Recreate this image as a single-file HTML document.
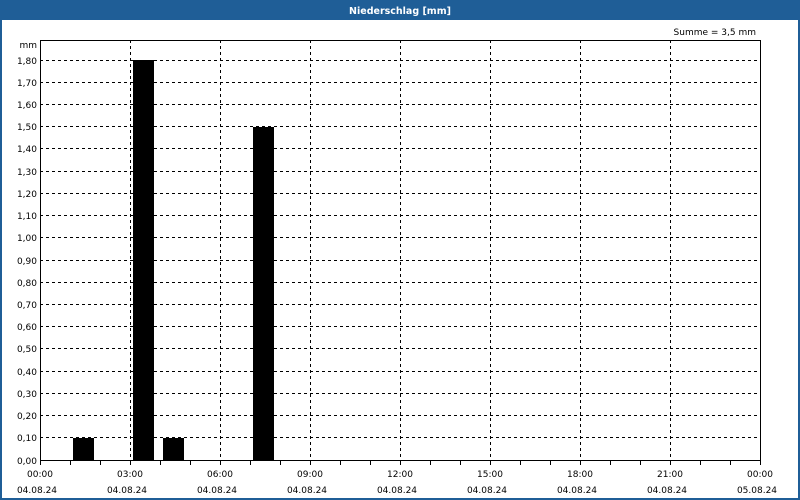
<!DOCTYPE html>
<html><head><meta charset="utf-8"><style>
html,body{margin:0;padding:0;width:800px;height:500px;overflow:hidden;background:#fff}
svg{display:block}
text{font-family:"DejaVu Sans","Liberation Sans",sans-serif;font-size:9px;fill:#000}
</style></head><body>
<svg width="800" height="500" viewBox="0 0 800 500">
<rect x="0" y="0" width="800" height="500" fill="#fff"/>
<rect x="0" y="0" width="800" height="20" fill="#1f5e97"/>
<rect x="0" y="20" width="2" height="480" fill="#1f5e97"/>
<rect x="798" y="20" width="2" height="480" fill="#1f5e97"/>
<rect x="0" y="498" width="800" height="2" fill="#1f5e97"/>
<text x="400" y="14" text-anchor="middle" style="fill:#fff;font-weight:bold;font-size:9.5px">Niederschlag [mm]</text>
<text x="756" y="35" text-anchor="end">Summe = 3,5 mm</text>
<g stroke="#000" stroke-width="1" stroke-dasharray="3,3" fill="none">
<path d="M40 437.5H760M40 415.5H760M40 393.5H760M40 371.5H760M40 348.5H760M40 326.5H760M40 304.5H760M40 282.5H760M40 260.5H760M40 237.5H760M40 215.5H760M40 193.5H760M40 171.5H760M40 148.5H760M40 126.5H760M40 104.5H760M40 82.5H760M40 60.5H760"/>
<path d="M130.5 40V460M220.5 40V460M310.5 40V460M400.5 40V460M490.5 40V460M580.5 40V460M670.5 40V460"/>
</g>
<g fill="#000">
<rect x="73" y="438" width="21" height="22"/>
<rect x="133" y="60" width="21" height="400"/>
<rect x="163" y="438" width="21" height="22"/>
<rect x="253" y="127" width="21" height="333"/>
</g>
<rect x="40.5" y="40.5" width="720" height="420" fill="none" stroke="#000"/>
<g stroke="#000">
<path d="M40.5 460V465M70.5 460V465M100.5 460V465M130.5 460V465M160.5 460V465M190.5 460V465M220.5 460V465M250.5 460V465M280.5 460V465M310.5 460V465M340.5 460V465M370.5 460V465M400.5 460V465M430.5 460V465M460.5 460V465M490.5 460V465M520.5 460V465M550.5 460V465M580.5 460V465M610.5 460V465M640.5 460V465M670.5 460V465M700.5 460V465M730.5 460V465M760.5 460V465"/>
</g>
<g text-anchor="end">
<text x="37" y="48">mm</text>
<text x="37" y="464">0,00</text>
<text x="37" y="441">0,10</text>
<text x="37" y="419">0,20</text>
<text x="37" y="397">0,30</text>
<text x="37" y="375">0,40</text>
<text x="37" y="352">0,50</text>
<text x="37" y="330">0,60</text>
<text x="37" y="308">0,70</text>
<text x="37" y="286">0,80</text>
<text x="37" y="264">0,90</text>
<text x="37" y="241">1,00</text>
<text x="37" y="219">1,10</text>
<text x="37" y="197">1,20</text>
<text x="37" y="175">1,30</text>
<text x="37" y="152">1,40</text>
<text x="37" y="130">1,50</text>
<text x="37" y="108">1,60</text>
<text x="37" y="86">1,70</text>
<text x="37" y="64">1,80</text>
</g>
<g text-anchor="middle">
<text x="40" y="477">00:00</text><text x="37" y="493">04.08.24</text>
<text x="130" y="477">03:00</text><text x="127" y="493">04.08.24</text>
<text x="220" y="477">06:00</text><text x="217" y="493">04.08.24</text>
<text x="310" y="477">09:00</text><text x="307" y="493">04.08.24</text>
<text x="400" y="477">12:00</text><text x="397" y="493">04.08.24</text>
<text x="490" y="477">15:00</text><text x="487" y="493">04.08.24</text>
<text x="580" y="477">18:00</text><text x="577" y="493">04.08.24</text>
<text x="670" y="477">21:00</text><text x="667" y="493">04.08.24</text>
<text x="760" y="477">00:00</text><text x="757" y="493">05.08.24</text>
</g>
</svg>
</body></html>
